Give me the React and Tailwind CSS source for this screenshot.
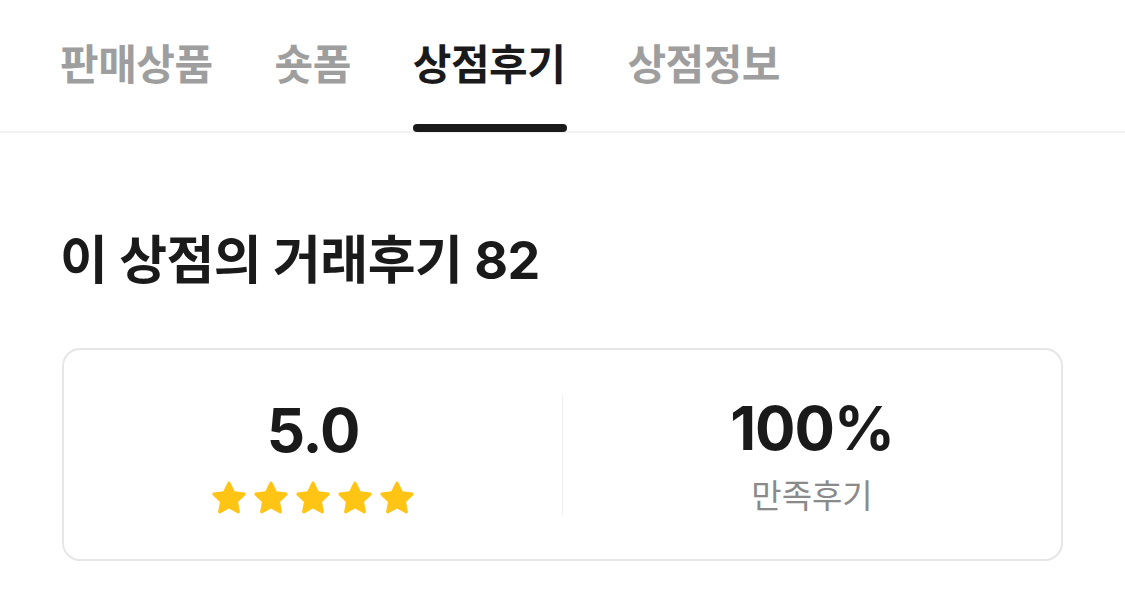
import React from "react";

const font = { fontFamily: 'Inter, "Noto Sans CJK KR", "Noto Sans", sans-serif' };

const tabs = ["판매상품", "숏폼", "상점후기", "상점정보"];

const Star = () => (
  <svg viewBox="0 0 24 24" className="w-[42px] h-[42px]" fill="#FFC414">
    <path
      d="M12 2.6c.35 0 .66.2.8.52l2.42 5.04 5.5.72c.35.05.64.29.75.62.1.34 0 .7-.25.94l-4.03 3.83 1.02 5.46c.06.34-.08.69-.36.9-.29.2-.66.22-.96.06L12 18.03l-4.89 2.66c-.3.16-.67.14-.96-.06-.28-.21-.42-.56-.36-.9l1.02-5.46L2.78 10.44c-.25-.24-.35-.6-.25-.94.11-.33.4-.57.75-.62l5.5-.72 2.42-5.04c.14-.32.45-.52.8-.52z"
    />
  </svg>
);

export default function App() {
  return (
    <div className="w-[1125px] h-[597px] bg-white overflow-hidden" style={font}>
      {/* Tabs */}
      <div className="flex gap-[62px] px-[60px] border-b-2 border-[#f2f2f2] h-[133px]">
        {tabs.map((t) => {
          const active = t === "상점후기";
          return (
            <div key={t} className="relative flex items-center pb-[2px]">
              <span
                className={`text-[42px] font-bold tracking-[-0.5px] ${
                  active ? "text-[#1a1a1a]" : "text-[#9e9e9e]"
                }`}
              >
                {t}
              </span>
              {active && (
                <div className="absolute left-0 right-[-2px] bottom-[-1px] h-[8px] rounded-full bg-[#1a1a1a]" />
              )}
            </div>
          );
        })}
      </div>

      {/* Heading */}
      <div className="px-[60px] pt-[96px]">
        <h2 className="text-[52px] font-bold text-[#1a1a1a] leading-[64px] tracking-[-0.5px]">
          이 상점의 거래후기 82
        </h2>
      </div>

      {/* Summary card */}
      <div className="mx-[62px] mt-[55px] h-[213px] border-2 border-[#e6e6e6] rounded-[18px] flex items-center">
        <div className="flex-1 flex flex-col items-center">
          <div className="text-[60px] font-bold text-[#1a1a1a] leading-[70px] tracking-[-1px] mt-[4px]">5.0</div>
          <div className="flex mt-[12px]">
            <Star />
            <Star />
            <Star />
            <Star />
            <Star />
          </div>
        </div>
        <div className="w-[1px] h-[120px] bg-[#f0f0f0]" />
        <div className="flex-1 flex flex-col items-center">
          <div className="text-[60px] font-bold text-[#1a1a1a] leading-[70px] tracking-[-1px]">100%</div>
          <div className="text-[33px] text-[#8a8a8a] leading-[40px] mt-[13px]">만족후기</div>
        </div>
      </div>
    </div>
  );
}
